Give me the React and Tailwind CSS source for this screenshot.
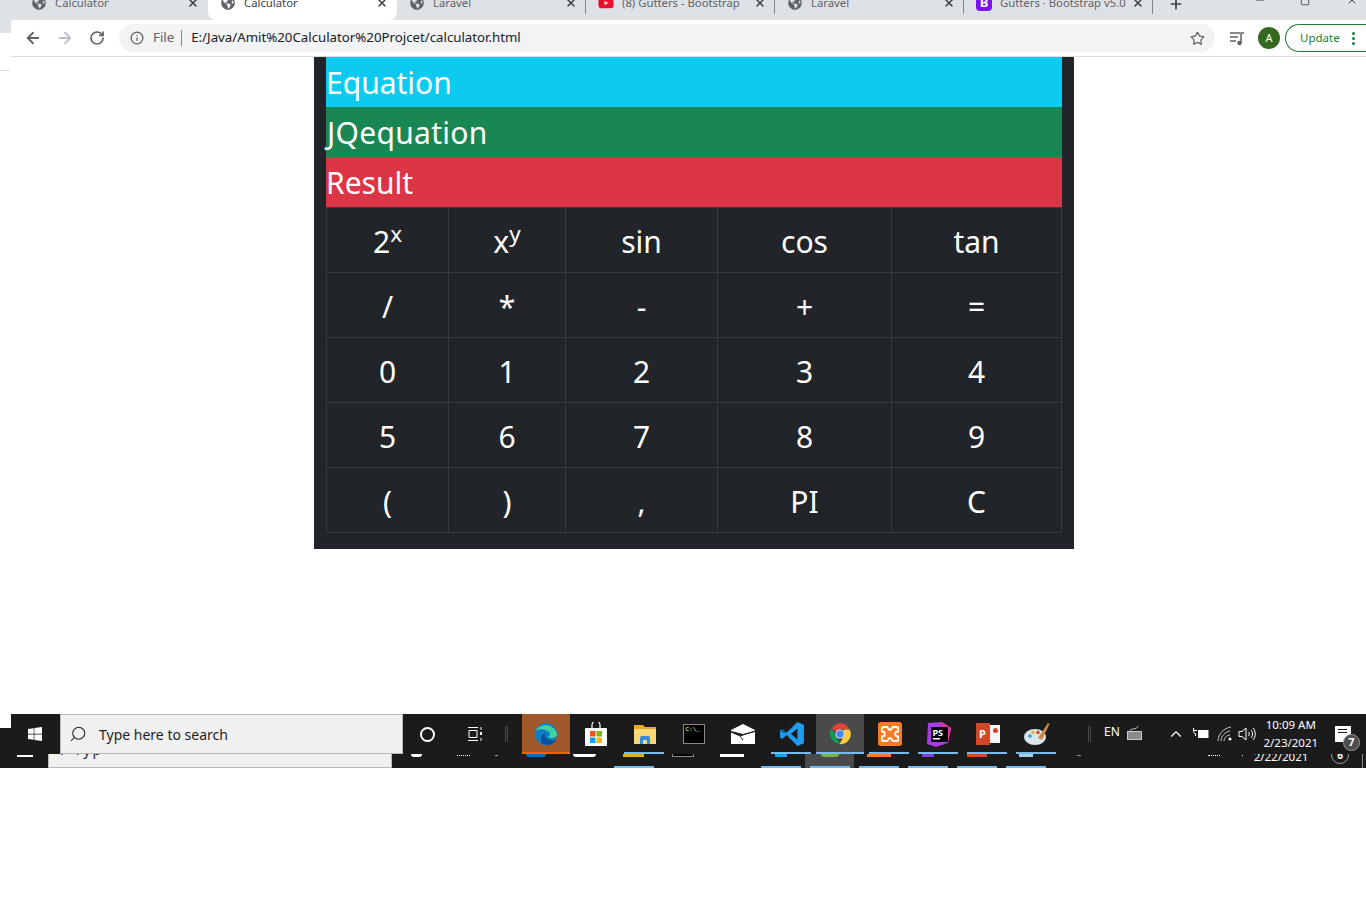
import React from 'react';
import { ArrowLeft, ArrowRight, RotateCw, Info, Star, X, Plus, Search, ChevronUp, Minus, Square } from 'lucide-react';
import { FaGlobeAmericas, FaWindows, FaYoutube } from 'react-icons/fa';

const tabs = [
    { title: 'Calculator' },
    { title: 'Calculator', active: true },
    { title: 'Laravel' },
    { title: '(8) Gutters - Bootstrap', icon: 'yt' },
    { title: 'Laravel' },
    { title: 'Gutters · Bootstrap v5.0', icon: 'bs' },
];

const rows = [
    [<>2<sup>x</sup></>, <>x<sup>y</sup></>, 'sin', 'cos', 'tan'],
    ['/', '*', '-', '+', '='],
    ['0', '1', '2', '3', '4'],
    ['5', '6', '7', '8', '9'],
    ['(', ')', ',', 'PI', 'C'],
];

const TabIcon = ({ kind }) => {
    if (kind === 'yt') return <FaYoutube className="h-4 w-4 shrink-0 text-[#e8102a]" />;
    if (kind === 'bs') {
        return (
            <div className="flex h-4 w-4 shrink-0 items-center justify-center rounded-sm bg-[#7b12f5] text-[13px] font-bold text-white">
                B
            </div>
        );
    }
    return <FaGlobeAmericas className="h-[14px] w-[14px] shrink-0 text-[#5f6368]" />;
};

const Tab = ({ tab, showDivider }) => (
    <div className={`relative flex h-[20px] w-[189px] items-start pl-[13px] ${tab.active ? 'rounded-b-lg bg-white' : ''}`}>
        <div className="flex h-[6px] w-[167px] items-center">
            <div className="flex w-[14px] shrink-0 justify-center">
                <TabIcon kind={tab.icon} />
            </div>
            <span className={`ml-[9px] w-[126px] overflow-hidden whitespace-nowrap text-[11.3px] ${tab.active ? 'text-[#3c4043]' : 'text-[#5f6368]'}`}>
                {tab.title}
            </span>
            <X className="ml-auto h-3 w-3 shrink-0 text-[#3c4043]" strokeWidth={3} />
        </div>
        {showDivider && <div className="absolute right-0 top-0 h-[14px] w-px bg-[#80868b]" />}
    </div>
);

const BrowserBar = () => (
    <header className="relative h-[57px] shrink-0 font-['Noto_Sans',sans-serif]">
        <div className="flex h-[20px] bg-[#dee1e6] pl-[19px]">
            {tabs.map((tab, i) => (
                <Tab key={i} tab={tab} showDivider={i >= 2} />
            ))}
            <div className="ml-[15px] flex h-[8px] items-center">
                <Plus className="h-4 w-4 text-[#3c4043]" strokeWidth={2.5} />
            </div>
            <div className="ml-auto flex h-[6px] items-end pr-[8px] text-[#3c4043]">
                <Minus className="h-3 w-3" />
                <Square className="ml-[34px] h-[10px] w-[10px]" />
                <X className="ml-[36px] h-3 w-3" />
            </div>
        </div>
        <div className="flex">
            <div className="h-[13px] w-[11px] shrink-0 bg-[#dee1e6]" />
            <div className="flex h-[37px] flex-1 items-center border-b border-[#dadce0] bg-white">
                <ArrowLeft className="ml-[13px] h-[18px] w-[18px] text-[#5f6368]" strokeWidth={2.4} />
                <ArrowRight className="ml-[14px] h-[18px] w-[18px] text-[#bdc1c6]" strokeWidth={2.4} />
                <RotateCw className="ml-[15px] h-[16px] w-[16px] text-[#5f6368]" strokeWidth={2.6} />
                <div className="ml-[14px] flex h-[28px] w-[1096px] items-center rounded-full bg-[#f1f3f4] pl-[11px] pr-[10px]">
                    <Info className="h-[14px] w-[14px] text-[#5f6368]" strokeWidth={2.2} />
                    <span className="ml-[9px] text-[13.25px] text-[#5f6368]">File</span>
                    <div className="ml-[7px] h-[16px] w-px bg-[#80868b]" />
                    <span className="ml-[9px] text-[13.25px] text-[#202124]">E:/Java/Amit%20Calculator%20Projcet/calculator.html</span>
                    <Star className="ml-auto h-[15px] w-[15px] text-[#5f6368]" strokeWidth={2} />
                </div>
                <svg className="ml-[14px] h-4 w-4 shrink-0" viewBox="0 0 16 16" fill="none" stroke="#5f6368" strokeWidth="1.5">
                    <path d="M1 3h10M1 7h8M1 11h6M12 13V3h3" />
                    <circle cx="10.5" cy="13" r="1.5" fill="#5f6368" />
                </svg>
                <div className="ml-[13px] flex h-[22px] w-[22px] shrink-0 items-center justify-center rounded-full bg-[#33691e] text-[11px] text-white">
                    A
                </div>
                <div className="ml-[5px] flex h-[28px] flex-1 items-center rounded-l-full border border-r-0 border-[#188038] pl-[14px] text-[11.5px] text-[#188038]">
                    Update
                    <div className="ml-auto mr-[11px] flex flex-col gap-[2px]">
                        <div className="h-[3px] w-[3px] rounded-full bg-[#188038]" />
                        <div className="h-[3px] w-[3px] rounded-full bg-[#188038]" />
                        <div className="h-[3px] w-[3px] rounded-full bg-[#188038]" />
                    </div>
                </div>
            </div>
        </div>
        {/* stray line from the window behind */}
        <div className="absolute left-0 top-[70px] h-px w-[10px] bg-[#dedede]" />
    </header>
);

const Calculator = () => (
    <main className="ml-[314px] w-[760px] bg-[#212529] px-[12px] pb-[16px] font-['Noto_Sans',sans-serif] text-white">
        <div className="h-[50px] bg-[#0dcaf0] text-[30px] leading-[52px]">Equation</div>
        <div className="h-[50px] bg-[#198754] pl-px text-[30px] leading-[52px] tracking-[0.3px]">JQequation</div>
        <div className="h-[50px] bg-[#dc3545] text-[30px] leading-[52px]">Result</div>
        <div className="grid grid-cols-[122px_117px_152px_174px_170px] border-l border-t border-[#373b3e]">
            {rows.flat().map((cell, i) => (
                <div key={i} className="h-[65px] border-b border-r border-[#373b3e] pt-px text-center text-[30px] leading-[66px]">
                    {cell}
                </div>
            ))}
        </div>
    </main>
);

const Tile = ({ children, className = 'w-[49px]', line = true, lineClass = 'left-[4px] w-[40px] bg-[#76b9ed]' }) => (
    <div className={`relative flex h-[40px] shrink-0 items-center justify-center ${className}`}>
        {children}
        {line && <div className={`absolute bottom-0 h-[2px] ${lineClass}`} />}
    </div>
);

const EdgeIcon = () => (
    <svg className="h-6 w-6" viewBox="0 0 24 24">
        <circle cx="12" cy="12" r="11" fill="#0c7ec4" />
        <path d="M2 9C4 2 20 0 23 12c0 3-3 4-6 4-2 0-3-1-3-2 2 0 3-2 1-4-3-3-10-4-13-1Z" fill="#3fd3a4" />
        <path d="M9 22c-3-3-3-9 2-11-1 5 3 9 11 7-2 4-8 6-13 4Z" fill="#0d4f9e" />
    </svg>
);

const StoreIcon = () => (
    <svg className="h-[24px] w-[24px]" viewBox="0 0 24 24">
        <path d="M8 6V3a4 4 0 0 1 8 0v3" fill="none" stroke="#fff" strokeWidth="1.2" />
        <rect x="1" y="6" width="22" height="18" rx="1" fill="#fff" />
        <rect x="6" y="9" width="5.5" height="5.5" fill="#f25022" />
        <rect x="12.5" y="9" width="5.5" height="5.5" fill="#7fba00" />
        <rect x="6" y="15.5" width="5.5" height="5.5" fill="#00a4ef" />
        <rect x="12.5" y="15.5" width="5.5" height="5.5" fill="#ffb900" />
    </svg>
);

const FolderIcon = () => (
    <svg className="h-[22px] w-[22px]" viewBox="0 0 22 20">
        <path d="M0 1h9l2 2h11v17H0Z" fill="#e9a82b" />
        <path d="M0 5h22v15H0Z" fill="#f8d775" />
        <path d="M6 20v-6a2 2 0 0 1 2-2h6a2 2 0 0 1 2 2v6h-3v-4H9v4Z" fill="#2f8fd8" />
    </svg>
);

const CmdIcon = () => (
    <div className="h-[20px] w-[22px] border border-[#8a8a8a] bg-black pl-[2px] pt-[1px] font-['Liberation_Mono',monospace] text-[6px] leading-[7px] text-white">
        C:\_
    </div>
);

const MailIcon = () => (
    <svg className="h-[20px] w-[24px]" viewBox="0 0 24 20">
        <path d="M12 0 24 6v1L12 10 0 7V6Z" fill="#fff" />
        <path d="M0 8.5 8 12l16-4v12H0Z" fill="#fff" />
        <path d="M24 7 9 12l3 4" fill="none" stroke="#1b1b1b" strokeWidth="1" />
    </svg>
);

const VsCodeIcon = () => (
    <svg className="h-[26px] w-[26px]" viewBox="0 0 24 24">
        <path d="M17 1 7 11 3 7.500 1 8.700v6.600L3 16.500l4-3.500 10 10 6-2.500V3.500Zm0 6v10l-6-5Z" fill="#1f9cf0" />
        <path d="M17 1 7 11 3 7.500 1 8.700l4 3.300 12-11Z" fill="#0065a9" />
    </svg>
);

const ChromeIcon = () => (
    <svg className="h-[22px] w-[22px]" viewBox="0 0 24 24">
        <path d="M12 12 3.300 7A10 10 0 0 1 21.900 7H12Z" transform="translate(0 -0.500)" fill="#db4437" />
        <path d="M2.500 6 8 15.500l4 7A11 11 0 0 1 2.500 6Z" fill="#0f9d58" />
        <path d="M22.500 7A11 11 0 0 1 11.500 23L17 13l-1-6Z" fill="#ffcd40" />
        <circle cx="12" cy="12" r="5" fill="#fff" />
        <circle cx="12" cy="12" r="4" fill="#4285f4" />
    </svg>
);

const XamppIcon = () => (
    <div className="flex h-[24px] w-[24px] items-center justify-center rounded-[3px] bg-[#fb7a24]">
        <svg className="h-[18px] w-[18px]" viewBox="0 0 18 18" fill="none" stroke="#fff" strokeWidth="2">
            <path d="M6 2H3a1.500 1.500 0 0 0 0 5c1 1 1 3 0 4a1.500 1.500 0 0 0 0 5h3c1-1 2-3 3-3s2 2 3 3h3a1.500 1.500 0 0 0 0-5c-1-1-1-3 0-4a1.500 1.500 0 0 0 0-5h-3c-1 1-2 3-3 3S7 3 6 2Z" />
        </svg>
    </div>
);

const PhpStormIcon = () => (
    <div className="relative h-[25px] w-[24px]">
        <svg className="h-full w-full" viewBox="0 0 24 25">
            <path d="M1 1 15 0l9 6-3 15-12 4-9-3Z" fill="#a93ce0" />
            <path d="M15 0l9 6-3 15-6-4Z" fill="#e0359c" />
            <rect x="4" y="5" width="17" height="15" fill="#000" />
            <rect x="6" y="16" width="7" height="1.500" fill="#fff" />
        </svg>
        <span className="absolute left-[6px] top-[5px] text-[9px] font-bold leading-[11px] text-white">PS</span>
    </div>
);

const PowerPointIcon = () => (
    <div className="relative h-[22px] w-[24px]">
        <div className="absolute right-0 top-[2px] h-[18px] w-[16px] bg-[#f6f6f6]" />
        <div className="absolute left-0 top-0 flex h-[22px] w-[14px] items-center justify-center bg-[#d24726] text-[11px] font-bold text-white">
            P
        </div>
        <div className="absolute right-[2px] top-[5px] h-[5px] w-[5px] rounded-full bg-[#d24726]" />
    </div>
);

const PaintIcon = () => (
    <svg className="h-[26px] w-[26px]" viewBox="0 0 26 26">
        <ellipse cx="11" cy="16" rx="11" ry="8" fill="#d8e6ee" />
        <circle cx="6" cy="15" r="1.800" fill="#3b9ad9" />
        <circle cx="9" cy="11.500" r="1.800" fill="#e8b730" />
        <circle cx="14" cy="11.500" r="1.800" fill="#d6482f" />
        <path d="M14 17 24 2l1.500 1L18 19Z" fill="#c98a45" />
    </svg>
);

const Sliver = ({ className }) => <div className={`h-[3px] shrink-0 ${className}`} />;

const OldSlot = ({ children, line = false, className = '' }) => (
    <div className={`flex h-[14px] w-[49px] shrink-0 flex-col items-center justify-between ${className}`}>
        <div className="flex w-full justify-center">{children}</div>
        {line && <div className="h-[2px] w-[40px] bg-[#76b9ed]" />}
    </div>
);

const Taskbar = () => (
    <footer className="mt-[165px] h-[54px] font-['Noto_Sans',sans-serif] text-white">
        <div className="flex h-[40px]">
            <div className="flex w-[11px] shrink-0 flex-col">
                <div className="h-[14px] bg-white" />
                <div className="flex-1 bg-[#1b1b1b]" />
            </div>
            <div className="flex flex-1 items-center bg-[#1b1b1b]">
                <div className="flex h-full w-[49px] shrink-0 items-center justify-center pr-[2px]">
                    <FaWindows className="h-4 w-4 text-white" />
                </div>
                <div className="flex h-full w-[343px] shrink-0 items-center border border-[#b9b9b9] bg-[#f0f0f0] pl-[8px] text-[#1f1f1f]">
                    <Search className="h-[18px] w-[18px] -scale-x-100" strokeWidth={1.4} />
                    <span className="ml-[12px] text-[14px]">Type here to search</span>
                </div>
                <div className="ml-[17px] h-[15px] w-[15px] shrink-0 rounded-full border-2 border-white" />
                <svg className="ml-[32px] h-4 w-4 shrink-0" viewBox="0 0 16 16" fill="none" stroke="#fff" strokeWidth="1">
                    <path d="M1 1.500h10M2 4.500h8v7H2ZM1 14.500h10M14 1v3M14 12v3" />
                    <rect x="13" y="6" width="2" height="3" fill="#fff" stroke="none" />
                </svg>
                <div className="ml-[22px] h-[16px] w-[3px] shrink-0 border-x border-[#4a4a4a]" />
                <div className="ml-[14px] flex shrink-0">
                    <Tile lineClass="left-0 w-[48px] bg-[#f7630c]" className="mr-px w-[48px] bg-[#a0592a]"><EdgeIcon /></Tile>
                    <Tile line={false}><StoreIcon /></Tile>
                    <Tile><FolderIcon /></Tile>
                    <Tile line={false}><CmdIcon /></Tile>
                    <Tile line={false}><MailIcon /></Tile>
                    <Tile><VsCodeIcon /></Tile>
                    <Tile lineClass="left-0 w-[48px] bg-[#76b9ed]" className="mr-px w-[48px] bg-[#4a4a4a]"><ChromeIcon /></Tile>
                    <Tile><XamppIcon /></Tile>
                    <Tile><PhpStormIcon /></Tile>
                    <Tile><PowerPointIcon /></Tile>
                    <Tile><PaintIcon /></Tile>
                </div>
                <div className="ml-[27px] h-[16px] w-[3px] shrink-0 border-x border-[#4a4a4a]" />
                <span className="ml-[13px] mb-[4px] text-[12px]">EN</span>
                <svg className="ml-[7px] mb-[3px] h-4 w-[15px] shrink-0" viewBox="0 0 15 16" fill="none" stroke="#c8c8c8">
                    <rect x="0.500" y="6.500" width="14" height="8" fill="#8a8a8a" />
                    <path d="M3 6c0-3 7-1 8-5" />
                </svg>
                <ChevronUp className="ml-[25px] h-[18px] w-[18px] shrink-0 text-white" strokeWidth={1.5} />
                <svg className="ml-[7px] h-[14px] w-[17px] shrink-0" viewBox="0 0 17 14" fill="none" stroke="#fff">
                    <path d="M1 3.500h4M1.500 1v2.500c0 2 1 3 2 3V9" />
                    <rect x="6.500" y="3.500" width="9.500" height="7" fill="#fff" />
                </svg>
                <svg className="ml-[8px] h-[16px] w-[16px] shrink-0" viewBox="0 0 16 16" fill="none" stroke="#c8c8c8">
                    <path d="M1 15C1 8 7 2 14 1M4 15c0-5 4-9 9-10M7 15c0-3 3-6 6-6" />
                    <circle cx="13" cy="13" r="1.500" fill="#fff" stroke="none" />
                </svg>
                <svg className="ml-[5px] h-[16px] w-[18px] shrink-0" viewBox="0 0 18 16" fill="none" stroke="#fff">
                    <path d="M1 5.500h3L8 2v12l-4-3.500H1ZM10.500 6c1 1 1 3 0 4M13 4c2 2 2 6 0 8M15 2c3 3 3 9 0 12" />
                </svg>
                <div className="flex w-[70px] shrink-0 flex-col items-center text-[11.5px] leading-[18px]">
                    <span>10:09 AM</span>
                    <span>2/23/2021</span>
                </div>
                <div className="relative ml-[9px] h-[16px] w-[16px] shrink-0 bg-white">
                    <div className="ml-[3px] mt-[3px] h-[1px] w-[9px] bg-[#1b1b1b]" />
                    <div className="ml-[3px] mt-[2px] h-[1px] w-[9px] bg-[#1b1b1b]" />
                    <div className="absolute left-[8px] top-[8px] flex h-[17px] w-[17px] items-center justify-center rounded-full border border-[#9a9a9a] bg-[#4d4d4d] text-[11px] font-bold">
                        7
                    </div>
                </div>
            </div>
        </div>
        {/* taskbar of the window behind, showing underneath */}
        <div className="flex h-[14px] overflow-hidden bg-[#1b1b1b]">
            <div className="ml-[17px] mt-[1px] h-[2px] w-[16px] shrink-0 bg-white" />
            <div className="ml-[15px] h-[14px] w-[344px] shrink-0 overflow-hidden border-x border-b border-[#b9b9b9] bg-[#f0f0f0]">
                <span className="relative -top-[17px] ml-[12px] text-[14px] tracking-[2px] text-[#1f1f1f]">/ Typ</span>
            </div>
            <div className="ml-[19px] h-[3px] w-[11px] shrink-0 rounded-b-full bg-white" />
            <div className="ml-[35px] mt-[1px] h-px w-[13px] shrink-0 border-t border-dotted border-white" />
            <div className="ml-[25px] mt-[1px] h-px w-[3px] shrink-0 bg-[#9a9a9a]" />
            <div className="ml-[13px] flex shrink-0">
                <OldSlot><Sliver className="w-[20px] rounded-b-full bg-[#0c6cb5]" /></OldSlot>
                <OldSlot><Sliver className="w-[23px] rounded-b-sm bg-white" /></OldSlot>
                <OldSlot line><Sliver className="w-[21px] bg-[#e9a82b]" /></OldSlot>
                <OldSlot><Sliver className="h-[2px] w-[22px] border-x border-b border-[#8a8a8a] bg-black" /></OldSlot>
                <OldSlot><Sliver className="w-[24px] bg-white" /></OldSlot>
                <OldSlot line><Sliver className="w-[12px] bg-[#1f9cf0]" /></OldSlot>
                <OldSlot line className="bg-[#4a4a4a]"><Sliver className="w-[18px] rounded-b-full bg-[#7cb342]" /></OldSlot>
                <OldSlot line><Sliver className="w-[24px] bg-[#fb7a24]" /></OldSlot>
                <OldSlot line><Sliver className="w-[12px] bg-[#8a3be0]" /></OldSlot>
                <OldSlot line><Sliver className="w-[20px] bg-[#d24726]" /></OldSlot>
                <OldSlot line><Sliver className="w-[14px] bg-[#a9cde3]" /></OldSlot>
            </div>
            <div className="ml-[27px] mt-[1px] h-px w-[4px] shrink-0 bg-[#8a8a8a]" />
            <div className="ml-[127px] mt-[1px] h-px w-[12px] shrink-0 border-t border-dotted border-white" />
            <div className="ml-[22px] mt-[1px] h-px w-px shrink-0 bg-white" />
            <div className="ml-[12px] mt-[-1px] h-[14px] w-[56px] shrink-0 text-center text-[11.5px] leading-[8px]">
                <span className="relative -left-[2px]">2/22/2021</span>
            </div>
            <div className="ml-[20px] -mt-[8px] flex h-[18px] w-[18px] shrink-0 items-center justify-center rounded-full border border-[#9a9a9a] text-[10px] font-bold">
                6
            </div>
            <div className="ml-[13px] h-full w-px shrink-0 bg-[#8a8a8a]" />
        </div>
    </footer>
);

const App = () => {
    return (
        <div className="flex min-h-[900px] flex-col overflow-hidden bg-white">
            <BrowserBar />
            <Calculator />
            <Taskbar />
        </div>
    );
};

export default App;
